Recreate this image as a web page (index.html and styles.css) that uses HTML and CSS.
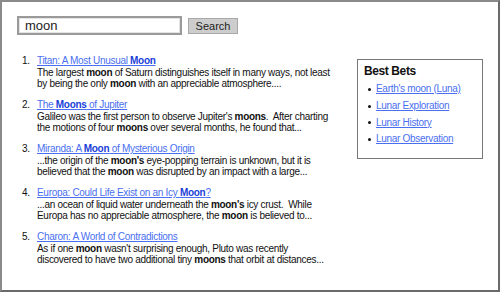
FILE: index.html
```html
<!DOCTYPE html>
<html lang="en">
<head>
  <meta charset="UTF-8">
  <title>Search: moon</title>
  <link rel="stylesheet" href="styles.css">
</head>
<body>

  <div class="frame">
    <form class="search-bar">
      <input type="text" class="query" value="moon">
      <button type="button" class="search-btn">Search</button>
    </form>

    <div class="content">
      <ol class="results">
        <li>
          <a href="#" class="title">Titan: A Most Unusual <b>Moon</b></a>
          <p class="snippet">The largest <b>moon</b> of Saturn distinguishes itself in many ways, not least by being the only <b>moon</b> with an appreciable atmosphere....</p>
        </li>
        <li>
          <a href="#" class="title">The <b>Moons</b> of Jupiter</a>
          <p class="snippet">Galileo was the first person to observe Jupiter's <b>moons</b>.&nbsp; After charting the motions of four <b>moons</b> over several months, he found that...</p>
        </li>
        <li>
          <a href="#" class="title">Miranda: A <b>Moon</b> of Mysterious Origin</a>
          <p class="snippet">...the origin of the <b>moon's</b> eye-popping terrain is unknown, but it is believed that the <b>moon</b> was disrupted by an impact with a large...</p>
        </li>
        <li>
          <a href="#" class="title">Europa: Could Life Exist on an Icy <b>Moon</b>?</a>
          <p class="snippet">...an ocean of liquid water underneath the <b>moon's</b> icy crust.&nbsp; While Europa has no appreciable atmosphere, the <b>moon</b> is believed to...</p>
        </li>
        <li>
          <a href="#" class="title">Charon: A World of Contradictions</a>
          <p class="snippet">As if one <b>moon</b> wasn't surprising enough, Pluto was recently discovered to have two additional tiny <b>moons</b> that orbit at distances...</p>
        </li>
      </ol>

      <div class="best-bets">
        <h3>Best Bets</h3>
        <ul>
          <li><a href="#">Earth's moon (Luna)</a></li>
          <li><a href="#">Lunar Exploration</a></li>
          <li><a href="#">Lunar History</a></li>
          <li><a href="#">Lunar Observation</a></li>
        </ul>
      </div>
    </div>
  </div>

</body>
</html>
```

FILE: styles.css
```css
body {
  margin: 0;
  font-family: "Liberation Sans", Arial, sans-serif;
  color: #111;
  background: #fff;
}
.frame {
  width: 500px;
  height: 292px;
  box-sizing: border-box;
  border: 2px solid #8a8a8a;
  border-right-color: #6a6a6a;
  border-bottom-color: #6a6a6a;
  padding: 14px 0 0 15px;
}
.search-bar {
  display: flex;
  align-items: center;
  gap: 6px;
  margin: 0;
}
.query {
  width: 165px;
  height: 19px;
  box-sizing: border-box;
  border: 2px solid #9a9a9a;
  box-shadow: inset 0 0 0 1px #e4e4e4;
  padding: 0 6px;
  font-family: "Liberation Sans", Arial, sans-serif;
  font-size: 13px;
  color: #222;
}
.search-btn {
  width: 50px;
  height: 16px;
  padding: 0;
  border: 1px solid #a8a8a8;
  background: #cdcdcd;
  font-family: "Liberation Sans", Arial, sans-serif;
  font-size: 11px;
  color: #222;
}
.content {
  display: flex;
  align-items: flex-start;
  margin-top: 20px;
}
.results {
  width: 308px;
  margin: 0;
  padding: 0 0 0 5px;
  list-style: none;
  counter-reset: hit;
  font-size: 10px;
  letter-spacing: -0.3px;
}
.results li {
  counter-increment: hit;
  display: grid;
  grid-template-columns: 15px 1fr;
  margin-bottom: 10px;
}
.results li::before {
  content: counter(hit) ".";
  grid-row: 1;
  line-height: 12px;
}
.results a, .best-bets a {
  color: #4a6ff0;
}
.results a b {
  color: #1a3fd8;
}
.title {
  grid-column: 2;
  line-height: 12px;
}
.snippet {
  grid-column: 2;
  margin: 0;
  line-height: 11px;
}
.best-bets {
  margin: 4px 0 0 27px;
  width: 126px;
  height: 100px;
  box-sizing: border-box;
  border: 1px solid #777;
  padding: 4px 6px;
}
.best-bets h3 {
  margin: 0 0 3px;
  font-size: 12px;
  letter-spacing: -0.4px;
}
.best-bets ul {
  margin: 0;
  padding: 0 0 0 4px;
  list-style: none;
  font-size: 10px;
  letter-spacing: -0.3px;
}
.best-bets li {
  display: flex;
  align-items: center;
  gap: 5px;
  line-height: 16.8px;
}
.best-bets li::before {
  content: "";
  width: 3px;
  height: 3px;
  border-radius: 50%;
  background: #111;
}
```
